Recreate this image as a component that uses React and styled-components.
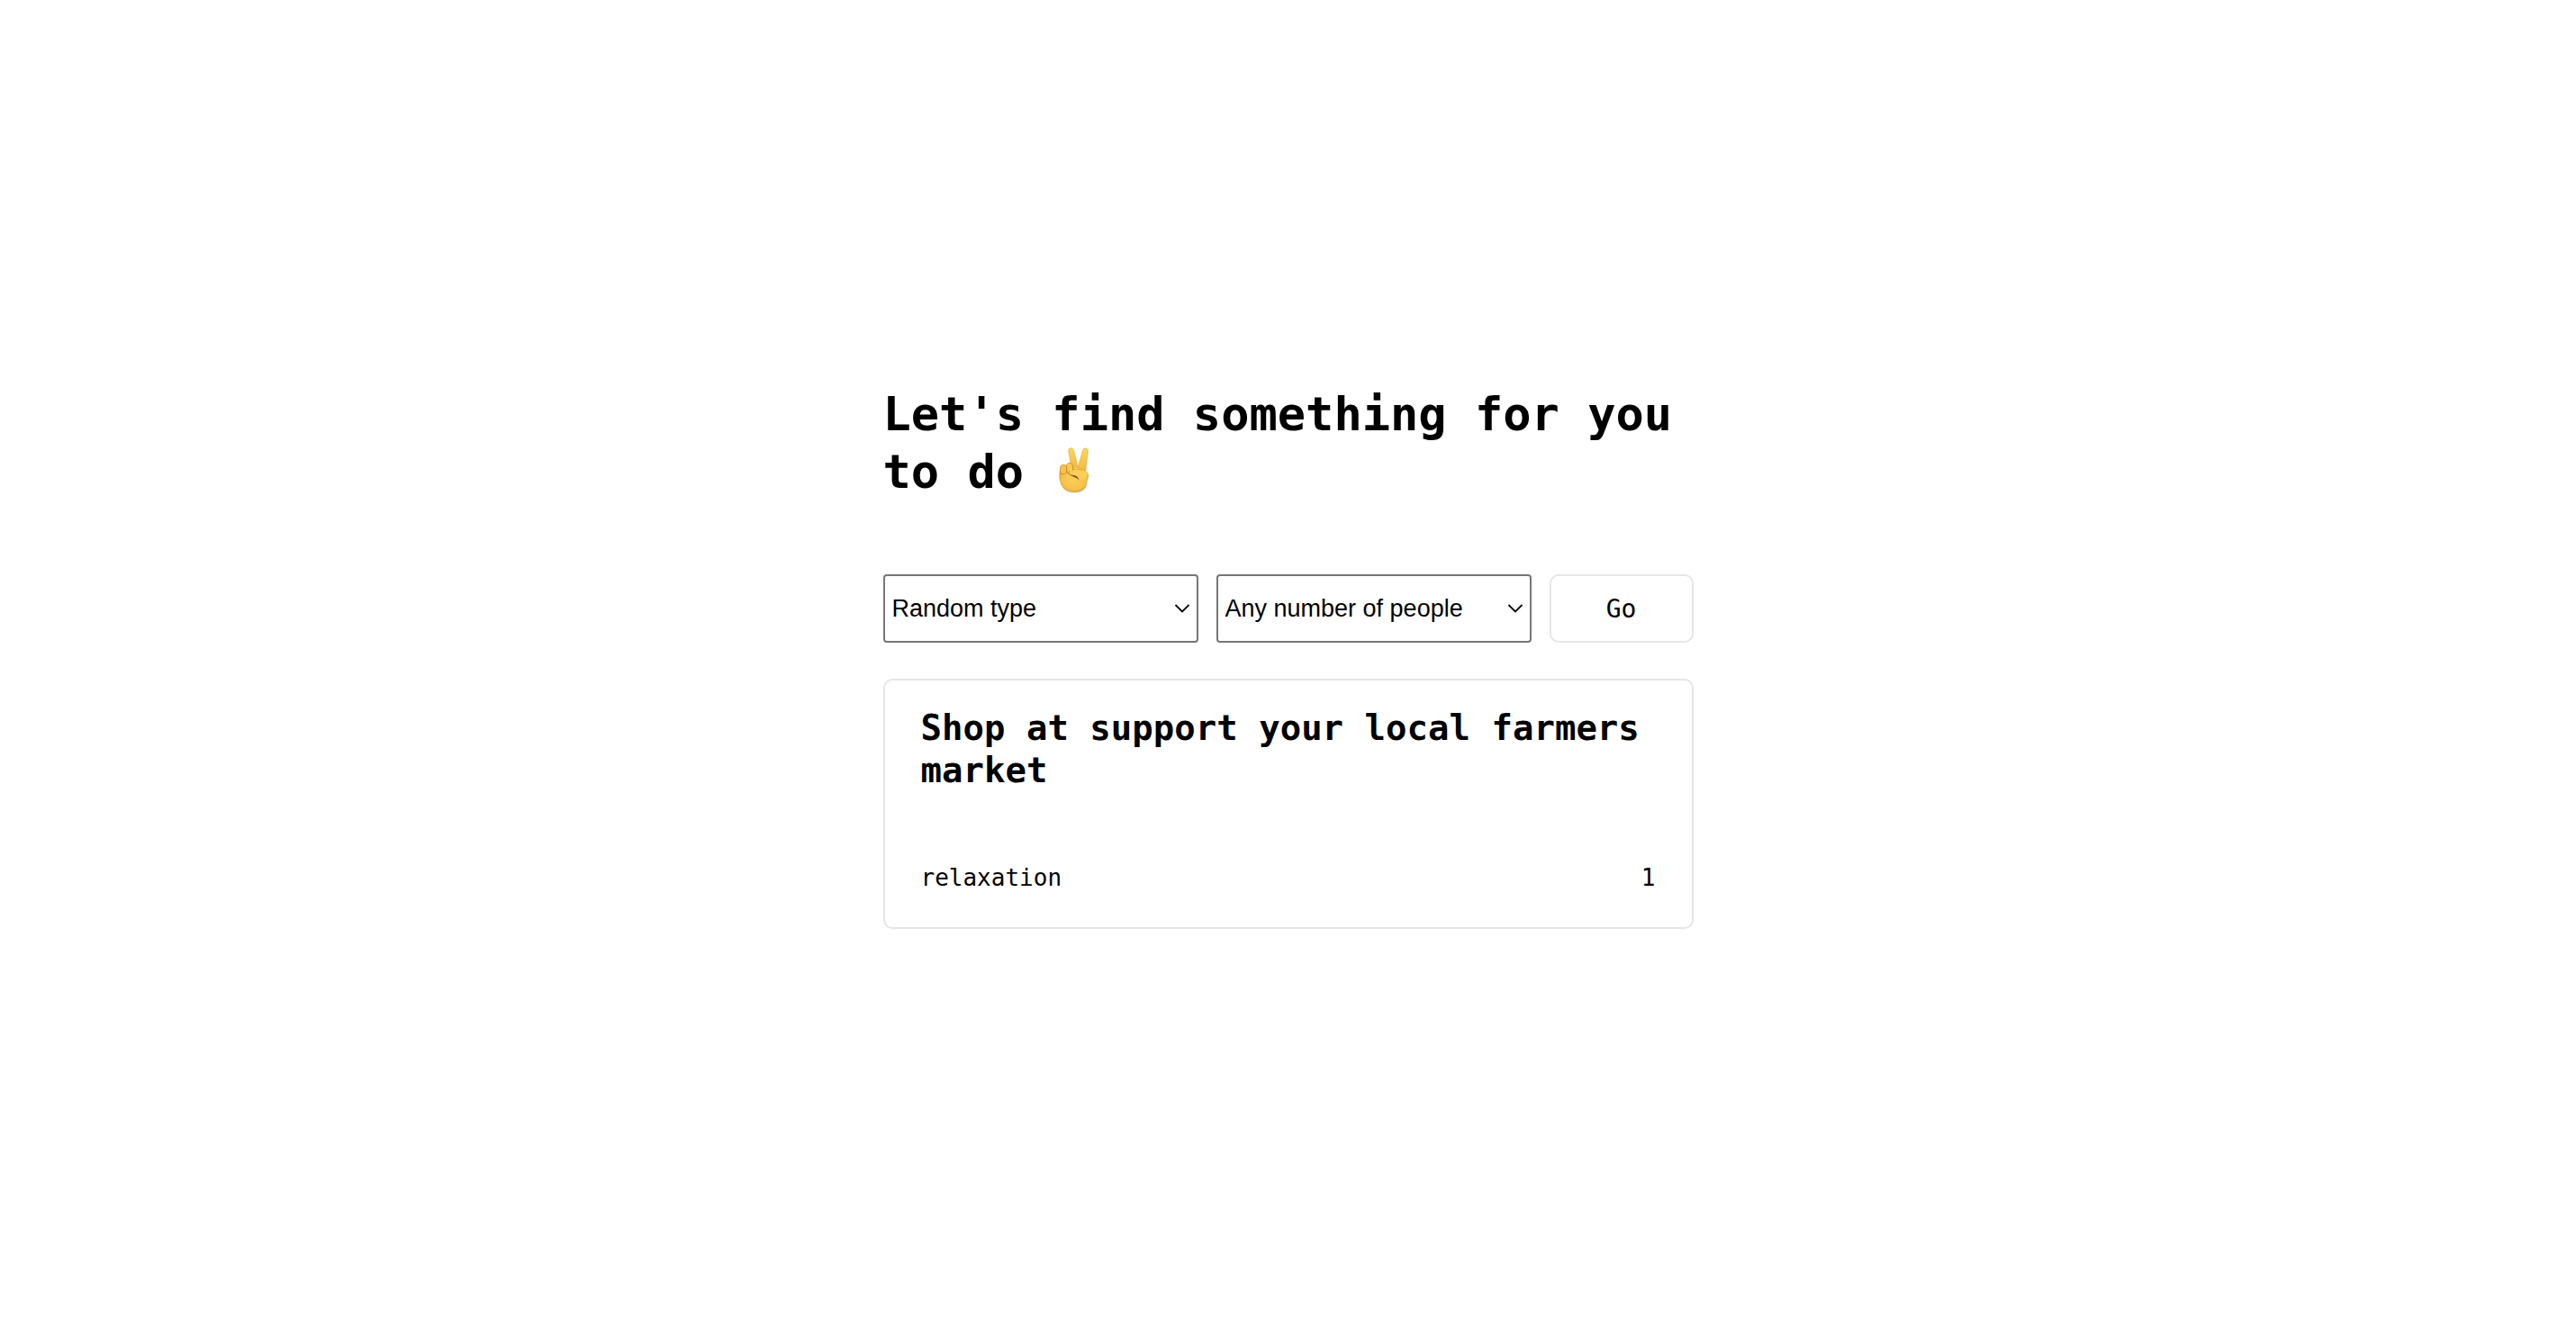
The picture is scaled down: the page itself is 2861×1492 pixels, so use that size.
import React, { useState } from "react";
import styled, { createGlobalStyle } from "styled-components";

const mono = '"DejaVu Sans Mono", "Liberation Mono", monospace';

const GlobalStyle = createGlobalStyle`
  *, *::before, *::after { box-sizing: border-box; }
  body {
    margin: 0;
    background: #fff;
    color: #000;
    font-family: ${mono};
    font-size: 26px;
  }
`;

const Page = styled.main`
  min-height: 100vh;
  padding: 0 20px 32px;
  display: flex;
  flex-direction: column;
  align-items: center;
  justify-content: center;
`;

const Content = styled.div`
  width: 100%;
  max-width: 900px;
  display: flex;
  flex-direction: column;
  gap: 40px;
`;

const Title = styled.h1`
  margin: 0 0 42px;
  font-size: 52px;
  line-height: 64px;
`;

const Hand = styled.svg`
  width: 34px;
  height: 51px;
  margin-left: 8px;
  vertical-align: -6px;
`;

const Filters = styled.form`
  display: grid;
  grid-template-columns: 1fr 1fr 160px;
  gap: 20px;
  height: 76px;
`;

const Field = styled.label`
  position: relative;
  display: flex;
`;

const Select = styled.select`
  appearance: none;
  width: 100%;
  padding: 0 40px 0 8px;
  border: 2px solid #767676;
  border-radius: 4px;
  background: #fff;
  color: #000;
  font-family: "Liberation Sans", Arial, sans-serif;
  font-size: 27px;
`;

const Chevron = styled.svg`
  position: absolute;
  top: 32px;
  right: 8px;
  width: 20px;
  height: 12px;
  pointer-events: none;
`;

const GoButton = styled.button`
  padding: 0;
  border: 2px solid #e6e6e6;
  border-radius: 10px;
  background: #fff;
  color: #000;
  font-family: ${mono};
  font-size: 28px;
`;

const Card = styled.article`
  padding: 29px 40px 40px;
  border: 2px solid #e6e6e6;
  border-radius: 10px;
`;

const CardTitle = styled.h2`
  margin: 0 0 81px;
  font-size: 39px;
  line-height: 47px;
`;

const Details = styled.div`
  display: flex;
  justify-content: space-between;
  line-height: 30px;
`;

function VictoryHand() {
  return (
    <Hand viewBox="78 45 102 153" role="img" aria-label="Victory hand">
      <defs>
        <linearGradient id="skin" x1="0" y1="0" x2="0" y2="1">
          <stop offset="0" stopColor="#fbd55f" />
          <stop offset="1" stopColor="#f3b83e" />
        </linearGradient>
        <radialGradient id="palm" cx="0.5" cy="0.45" r="0.6">
          <stop offset="0" stopColor="#fbd05c" />
          <stop offset="0.7" stopColor="#f6c248" />
          <stop offset="1" stopColor="#dc9c30" />
        </radialGradient>
      </defs>
      <path d="M110 58C108 44 125 44 128 56L142 112L121 118Z" fill="url(#skin)" stroke="#d99c35" strokeWidth="1.5" />
      <path d="M157 57C159 44 177 45 175 59L167 126L138 123Z" fill="url(#skin)" stroke="#d99c35" strokeWidth="1.5" />
      <path d="M81 126C92 116 112 121 132 117C154 117 177 122 176 139C175 151 171 155 170 169C167 187 149 195 129 195C103 195 88 181 83 160C80 149 79 136 81 126Z" fill="url(#palm)" stroke="#d59730" strokeWidth="1.5" />
      <path d="M83 111C87 100 101 101 104 109L104 126C103 136 86 138 82 127Z" fill="#f6c248" stroke="#b87922" strokeWidth="2" />
      <path d="M104 104C107 94 123 95 124 106L125 126C124 134 108 136 105 128Z" fill="#f9ca52" stroke="#b87922" strokeWidth="2" />
      <path d="M118 122C137 119 169 117 174 132C175 144 165 152 154 154C142 152 133 141 119 138C108 135 109 124 118 122Z" fill="#fbce5a" />
      <path d="M113 125C107 132 114 137 124 139C136 141 144 148 143 153" fill="none" stroke="#ad6c1c" strokeWidth="2.5" strokeLinecap="round" />
      <path d="M117 137C128 137 142 140 144 151C137 148 130 144 117 137Z" fill="#7f4912" />
    </Hand>
  );
}

function Dropdown({ label, options }) {
  const [value, setValue] = useState(options[0]);
  return (
    <Field>
      <Select aria-label={label} value={value} onChange={(e) => setValue(e.target.value)}>
        {options.map((option) => (
          <option key={option}>{option}</option>
        ))}
      </Select>
      <Chevron viewBox="0 0 20 12" aria-hidden="true">
        <path d="M2.5 2L10 9.5L17.5 2" fill="none" stroke="#000" strokeWidth="1.8" />
      </Chevron>
    </Field>
  );
}

export default function App() {
  return (
    <>
      <GlobalStyle />
      <Page>
        <Content>
          <Title>
            Let's find something for you to do <VictoryHand />
          </Title>
          <Filters onSubmit={(e) => e.preventDefault()}>
            <Dropdown label="Activity type" options={["Random type"]} />
            <Dropdown label="Participants" options={["Any number of people"]} />
            <GoButton type="submit">Go</GoButton>
          </Filters>
          <Card>
            <CardTitle>Shop at support your local farmers market</CardTitle>
            <Details>
              <span>relaxation</span>
              <span>1</span>
            </Details>
          </Card>
        </Content>
      </Page>
    </>
  );
}
